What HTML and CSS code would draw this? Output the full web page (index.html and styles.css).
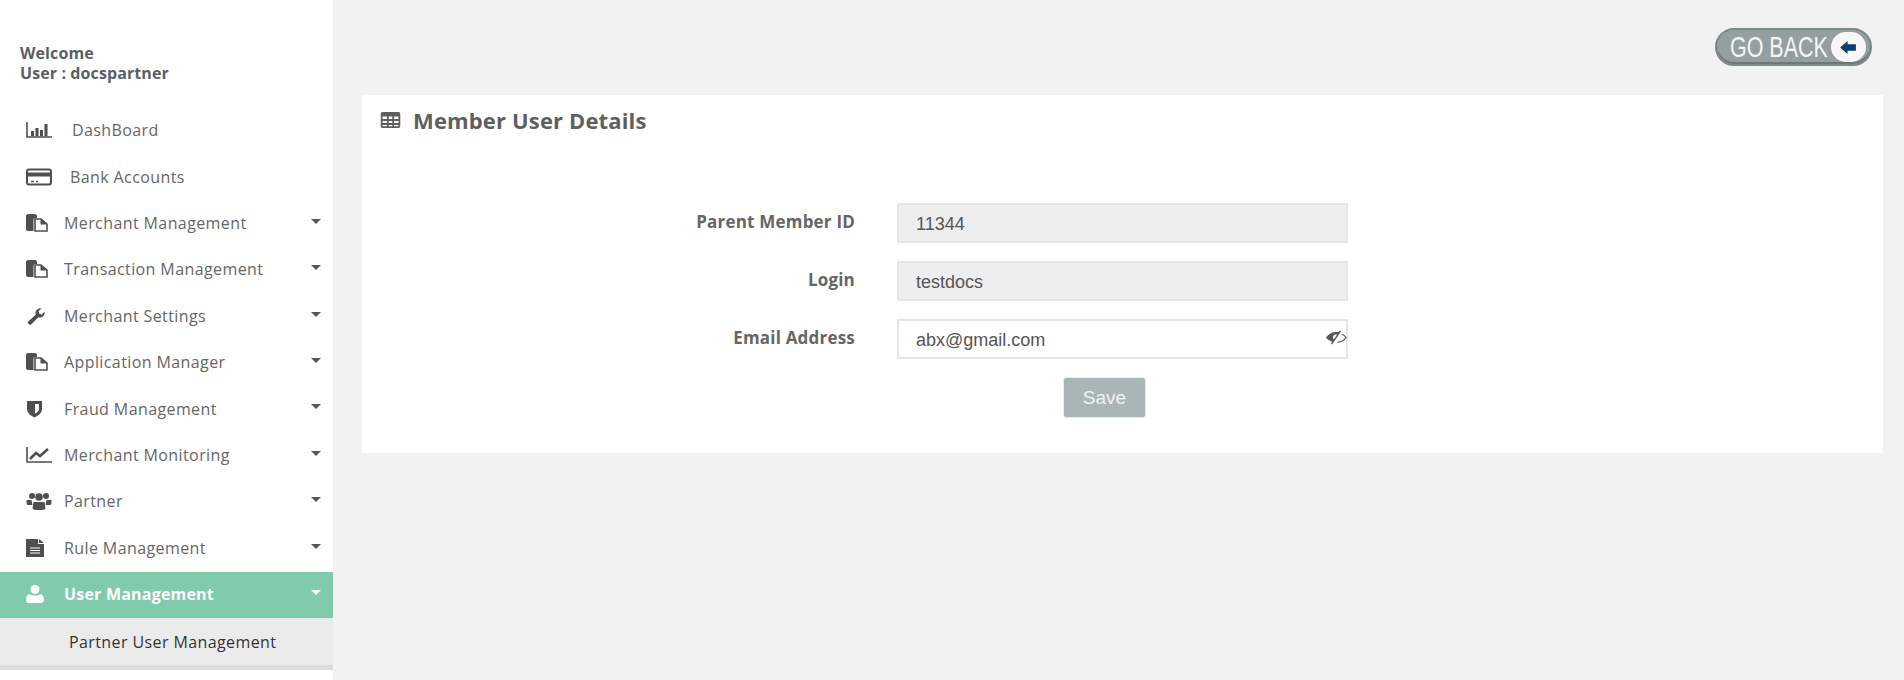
FILE: index.html
```html
<!DOCTYPE html>
<html lang="en">
<head>
    <meta charset="UTF-8">
    <title>Member User Details</title>
    <link rel="stylesheet" href="styles.css">
</head>
<body>
    <div class="sidebar">
        <div class="welcome">Welcome<br>User : docspartner</div>
        <ul class="nav">
            <li class="nav-item nav-dash">
                <svg class="icon icon-wide" viewBox="0 0 26 16"><path d="M1 0v15h25" fill="none" stroke="currentColor" stroke-width="1.600"/><path d="M5 9h3v5H5zM9.500 6h3v8h-3zM14 8h3v6h-3zM18.500 2h3v12h-3z" fill="currentColor"/></svg>
                <span>DashBoard</span>
            </li>
            <li class="nav-item nav-bank">
                <svg class="icon icon-wide" viewBox="0 0 26 17"><rect x="1" y="1" width="24" height="15" rx="2" fill="none" stroke="currentColor" stroke-width="2"/><path d="M1 4h24v4H1z" fill="currentColor"/><path d="M5 13h3M10 13h2" stroke="currentColor" stroke-width="1.500"/></svg>
                <span>Bank Accounts</span>
            </li>
            <li class="nav-item">
                <svg class="icon" viewBox="0 0 22 18"><use href="#files"/></svg>
                <span>Merchant Management</span><i class="caret"></i>
            </li>
            <li class="nav-item">
                <svg class="icon" viewBox="0 0 22 18"><use href="#files"/></svg>
                <span>Transaction Management</span><i class="caret"></i>
            </li>
            <li class="nav-item">
                <svg class="icon" viewBox="0 0 22 20"><path d="M1 16.500 9.500 8.500C8.500 5 11 1 16 1.500L12.800 4.800 13.500 7.500 16.300 8.200 19.500 5C20 10 16 12.500 12.500 11.500L4.500 19.500C3 20.500 0 18 1 16.500Z" fill="currentColor"/></svg>
                <span>Merchant Settings</span><i class="caret"></i>
            </li>
            <li class="nav-item">
                <svg class="icon" viewBox="0 0 22 18"><use href="#files"/></svg>
                <span>Application Manager</span><i class="caret"></i>
            </li>
            <li class="nav-item">
                <svg class="icon" viewBox="0 0 22 18"><path d="M1 1h15v8c0 4-4 7-7.500 8.500C5 16 1 13 1 9z" fill="currentColor"/><path d="M9 4h4v5c0 2-2 3.500-4 4.500z" fill="#fff"/></svg>
                <span>Fraud Management</span><i class="caret"></i>
            </li>
            <li class="nav-item">
                <svg class="icon icon-wide" viewBox="0 0 26 16"><path d="M1 0v15h25" fill="none" stroke="currentColor" stroke-width="1.600"/><path d="M4 12l6-6 4 3 8-7" fill="none" stroke="currentColor" stroke-width="2.600"/></svg>
                <span>Merchant Monitoring</span><i class="caret"></i>
            </li>
            <li class="nav-item">
                <svg class="icon icon-wide" viewBox="0 0 25 18"><circle cx="5.500" cy="4" r="3" fill="currentColor"/><circle cx="19.500" cy="4" r="3" fill="currentColor"/><circle cx="12.500" cy="5" r="3.800" fill="currentColor"/><path d="M0 8h5l1 5H1.500C0 13 0 11 0 8zM25 8h-5l-1 5h4.500C25 13 25 11 25 8zM7 10h11l1 6c0 1-2 2-3 2H9c-1 0-3-1-3-2z" fill="currentColor"/></svg>
                <span>Partner</span><i class="caret"></i>
            </li>
            <li class="nav-item">
                <svg class="icon" viewBox="0 0 22 18"><path d="M0 0h12v5h6v13H0z" fill="currentColor"/><path d="M13 0l5 4h-5z" fill="currentColor"/><path d="M4 9h10M4 11.500h10M4 14h10" stroke="#fff" stroke-width="1.100"/></svg>
                <span>Rule Management</span><i class="caret"></i>
            </li>
            <li class="nav-item active">
                <svg class="icon" viewBox="0 0 22 18"><circle cx="9" cy="4.500" r="4.500" fill="currentColor"/><path d="M0 15c0-3 1.500-6 3.500-6 1.500 1 3.500 1.500 5.500 1.500s4-.5 5.500-1.500c2 0 3.500 3 3.500 6 0 2-1 3-3 3H3c-2 0-3-1-3-3z" fill="currentColor"/></svg>
                <span>User Management</span><i class="caret"></i>
            </li>
            <li class="nav-sub">Partner User Management</li>
        </ul>
    </div>

    <div class="main">
        <div class="topbar">
            <div class="go-back">
                <span class="go-back-text">GO BACK</span>
                <span class="go-back-circle">
                    <svg viewBox="0 0 18 14" width="17" height="13"><path d="M0 7 8 0v3.500h9v7H8V14z" fill="#0f3d6e"/></svg>
                </span>
            </div>
        </div>

        <div class="panel">
            <h2 class="panel-title">
                <svg class="title-icon" viewBox="0 0 22 18"><path d="M2 0h18a2 2 0 0 1 2 2v14a2 2 0 0 1-2 2H2a2 2 0 0 1-2-2V2a2 2 0 0 1 2-2zm0 5v3h5V5zm7 0v3h4V5zm6 0v3h5V5zM2 10v2.500h5V10zm7 0v2.500h4V10zm6 0v2.500h5V10zM2 14.500V16h5v-1.500zm7 0V16h4v-1.500zm6 0V16h5v-1.500z" fill="currentColor" fill-rule="evenodd"/></svg>
                Member User Details
            </h2>

            <form class="form">
                <label class="form-label">Parent Member ID</label>
                <div class="field"><input class="input" type="text" value="11344" disabled></div>
                <label class="form-label">Login</label>
                <div class="field"><input class="input" type="text" value="testdocs" disabled></div>
                <label class="form-label">Email Address</label>
                <div class="field">
                    <input class="input" type="text" value="abx@gmail.com">
                    <svg class="eye" viewBox="0 0 22 14"><path d="M1 7C3.500 3.500 7 1.500 11 1.500h2.500L15 0l1 1-9 13-1-1 1.300-1.700C5 10.500 2.500 9 1 7zm9-3C9 4.300 8 5.500 8 7c0 .8.300 1.500.7 2L12 4.300C11.400 4 10.700 3.900 10 4z" fill="#555" fill-rule="evenodd"/><path d="M16.500 3.500C18.500 4.300 20 5.500 21 7c-1.700 2.700-5 4.500-8.500 4.800" fill="none" stroke="#555" stroke-width="1.300"/></svg>
                </div>
                <div class="form-actions">
                    <button class="btn-save" type="button">Save</button>
                </div>
            </form>
        </div>
    </div>

    <svg class="defs" width="0" height="0">
        <defs>
            <g id="files">
                <path d="M0 2c0-1 1-2 2-2h7c1 0 2 1 2 2v2H9c-1 0-1.500 1-1.500 2v11H2c-1 0-2-1-2-2z" fill="currentColor"/>
                <path d="M9 5h6l6 5v7H9z" fill="#fff" stroke="currentColor" stroke-width="1.600"/>
                <path d="M14.500 4.500v6h7z" fill="currentColor"/>
            </g>
        </defs>
    </svg>
</body>
</html>
```

FILE: styles.css
```css
html, body {
    height: 100%;
}
body {
    margin: 0;
    background-color: #f2f2f2;
    font-family: "Open Sans", "Liberation Sans", sans-serif;
    color: #5f5f5f;
    display: flex;
    overflow: hidden;
}
.defs {
    position: absolute;
}

/* sidebar */
.sidebar {
    width: 333px;
    flex-shrink: 0;
    min-height: 680px;
    background-color: #fff;
}
.welcome {
    padding: 43px 0 0 20px;
    height: 65px;
    font-size: 16px;
    font-weight: 700;
    letter-spacing: 0.1px;
    line-height: 20px;
    color: #5a5f66;
}
.nav {
    list-style: none;
    margin: 0;
    padding: 0;
}
.nav-item {
    display: flex;
    align-items: center;
    height: 46.4px;
    box-sizing: border-box;
    padding: 0 0 2px 26px;
    font-size: 16px;
    letter-spacing: 0.4px;
    color: #666;
    position: relative;
}
.icon {
    width: 22px;
    height: 18px;
    margin-right: 16px;
    flex-shrink: 0;
    color: #4f4f4f;
}
.icon-wide {
    width: 26px;
    margin-right: 12px;
}
.nav-dash span {
    margin-left: 8px;
}
.nav-bank span {
    margin-left: 6px;
}
.caret {
    position: absolute;
    right: 12px;
    top: 18px;
    border-left: 5px solid transparent;
    border-right: 5px solid transparent;
    border-top: 5px solid #555;
}
.nav-item.active {
    background-color: #7fcbab;
    color: #fff;
    font-weight: 700;
    letter-spacing: 0.2px;
}
.nav-item.active .icon {
    color: #fff;
}
.nav-item.active .caret {
    border-top-color: #fff;
}
.nav-sub {
    background-color: #ebebeb;
    border-bottom: 5px solid #dcdcdc;
    height: 46.4px;
    line-height: 49px;
    padding-left: 69px;
    font-size: 16px;
    letter-spacing: 0.4px;
    color: #333;
}

/* main */
.main {
    flex: 1;
    min-width: 0;
    padding: 0 21px 0 29px;
}
.topbar {
    height: 95px;
    display: flex;
    justify-content: flex-end;
    align-items: flex-start;
    padding-right: 11px;
    box-sizing: border-box;
    padding-top: 28px;
}
.go-back {
    width: 157px;
    height: 38px;
    box-sizing: border-box;
    border-radius: 19px;
    border: 2px solid #7d8989;
    background-color: #94a0a0;
    box-shadow: inset 0 -2px 0 #6e7878;
    display: flex;
    align-items: center;
    justify-content: space-between;
    padding: 0 4px 0 13px;
}
.go-back-text {
    font-family: "Liberation Sans", sans-serif;
    font-size: 29px;
    color: #f4f6f6;
    transform: scaleX(0.74);
    transform-origin: left center;
    white-space: nowrap;
    width: 100px;
}
.go-back-circle {
    width: 35px;
    height: 30px;
    border-radius: 15px;
    background-color: #f7f7f7;
    display: flex;
    align-items: center;
    justify-content: center;
}
.panel {
    background-color: #fff;
    height: 358px;
}
.panel-title {
    margin: 0;
    padding: 0 0 2px 18px;
    height: 52px;
    box-sizing: border-box;
    font-size: 22px;
    letter-spacing: 0.15px;
    line-height: 26px;
    font-weight: 700;
    color: #5f5f5f;
    display: flex;
    align-items: center;
}
.title-icon {
    width: 21px;
    height: 16px;
    margin-right: 12px;
}
.form {
    display: grid;
    grid-template-columns: 493px 451px;
    column-gap: 42px;
    row-gap: 18px;
    padding-top: 56px;
}
.form-label {
    font-size: 17px;
    font-weight: 700;
    letter-spacing: 0.2px;
    color: #666;
    text-align: right;
    line-height: 38px;
}
.field {
    position: relative;
}
.input {
    display: block;
    width: 100%;
    height: 40px;
    box-sizing: border-box;
    padding: 2px 17px 0;
    border: 2px solid #e6e6e6;
    background-color: #fff;
    font-family: "Liberation Sans", sans-serif;
    font-size: 18px;
    color: #555;
    outline: none;
}
.input:disabled {
    background-color: #eee;
    color: #555;
    opacity: 1;
}
.eye {
    position: absolute;
    right: 1px;
    top: 11px;
    width: 22px;
    height: 15px;
}
.form-actions {
    grid-column: 2;
    padding-left: 166px;
}
.btn-save {
    width: 83px;
    height: 41px;
    border: 1px solid #e8eded;
    border-radius: 3px;
    background-color: #aab6b5;
    color: #f0f3f3;
    font-family: "Liberation Sans", sans-serif;
    font-size: 19px;
}
```
